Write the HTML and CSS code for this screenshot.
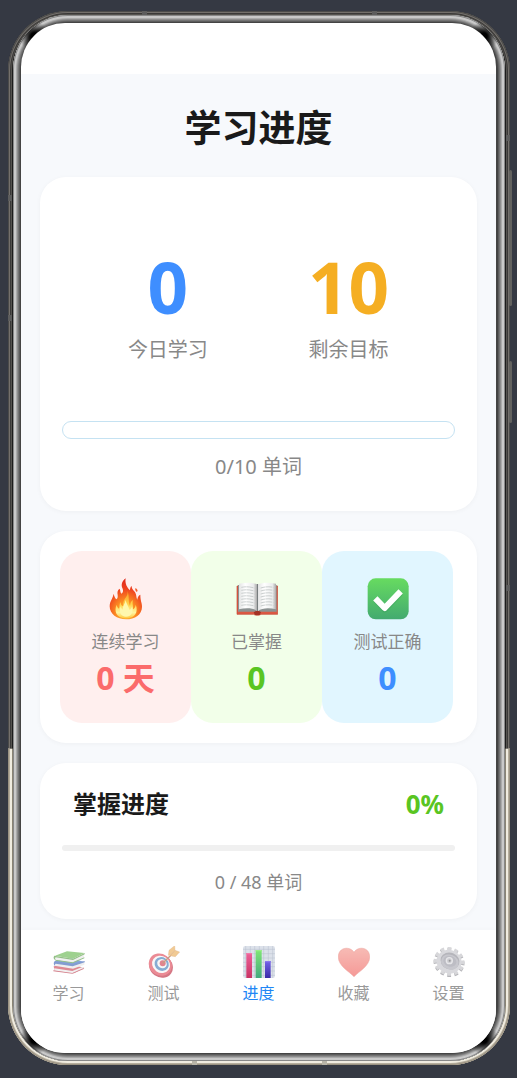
FILE: index.html
```html
<!DOCTYPE html>
<html lang="zh-CN">
<head>
<meta charset="utf-8">
<meta name="viewport" content="width=device-width, initial-scale=1">
<title>学习进度</title>
<link rel="stylesheet" href="styles.css">
</head>
<body>
<div class="phone">
  <span class="key key-volume"></span>
  <span class="key key-power"></span>
  <span class="band band-left-high"></span>
  <span class="band band-left-low"></span>
  <span class="band band-right-high"></span>
  <span class="band band-right-low"></span>
  <span class="band band-wide band-top-left"></span>
  <span class="band band-wide band-top-right"></span>
  <span class="band band-wide band-bottom-left"></span>
  <span class="band band-wide band-bottom-right"></span>
  <div class="bezel">
    <div class="corners">
      <div class="screen">
        <div class="status-bar"></div>
        <main class="content">
          <h1 class="title">学习进度</h1>

          <section class="card today">
            <div class="today-numbers">
              <div class="today-item">
                <strong class="big blue">0</strong>
                <span class="label">今日学习</span>
              </div>
              <div class="today-item">
                <strong class="big orange">10</strong>
                <span class="label">剩余目标</span>
              </div>
            </div>
            <progress class="goal-bar" value="0" max="10" aria-label="今日学习"></progress>
            <p class="label">0/10 单词</p>
          </section>

          <section class="card stats">
            <div class="stat stat-red">
              <svg class="stat-icon" viewBox="13 26 126 126" aria-hidden="true">
                <defs>
                  <radialGradient id="flame" cx=".5" cy=".85" r=".8"><stop offset="0" stop-color="#ffc43a"/><stop offset=".4" stop-color="#fb8a22"/><stop offset=".75" stop-color="#ee421f"/><stop offset="1" stop-color="#e12c1c"/></radialGradient>
                  <linearGradient id="core" x1="0" y1="0" x2="0" y2="1"><stop offset="0" stop-color="#fb9125"/><stop offset=".5" stop-color="#ffd34c"/><stop offset=".8" stop-color="#fff5a0"/><stop offset="1" stop-color="#ffc83d"/></linearGradient>
                </defs>
                <path fill="url(#flame)" d="M75 27c-11 7-15 21-9 31 3 7 0 13-4 15-3-4-3-10-5-15-6 3-8 11-6 19 1 7-1 12-4 13-5-4-5-10-9-17 1 12-11 21-11 38 0 23 22 39 49 39s48-15 48-38c0-12-5-17-5-36-6 2-8 8-9 15-4-7-2-14-6-21-4-7-11-9-11-20-4 3-5 8-5 13-8-7-16-20-13-36z"/>
                <path fill="#f2602e" d="M105 56c-3 4-1 8 3 12 4-2 4-7-3-12z"/>
                <path fill="url(#core)" d="M78 62c7 12-1 20-7 29-4 7-3 14-3 20-6-2-8-7-8-13-5 6-2 13-5 20-4-3-6-7-7-12-8 17-3 41 28 41 27 0 38-20 29-41-1 8-4 12-8 14 1-12-3-17 0-28-6 3-8 9-9 18-7-17 0-33-10-48z"/>
                <path fill="#fff7ad" d="M75 92c-2 12-9 17-9 29-3-2-5-5-6-10-6 18 1 31 16 31s24-14 18-30c-2 6-5 8-8 9-2-11-9-17-11-29z"/>
              </svg>
              <span class="stat-label">连续学习</span>
              <strong class="stat-value">0 天</strong>
            </div>
            <div class="stat stat-green">
              <svg class="stat-icon" viewBox="31 26 126 126" aria-hidden="true">
                <defs><linearGradient id="page" x1="0" x2="1"><stop offset="0" stop-color="#e3e4e4"/><stop offset=".35" stop-color="#fff"/><stop offset=".8" stop-color="#eceded"/><stop offset="1" stop-color="#aaa"/></linearGradient></defs>
                <path fill="#dd5843" stroke="#c24937" stroke-width="2" d="M34 50h122v85h-50c-4 4-18 4-22 0H34z"/>
                <path fill="#8d9292" d="M37 47h116v80H101l-6 4-6-4H37z"/>
                <path fill="url(#page)" d="M40 43c20-4 42-4 54 2v80c-11-9-33-10-54-5z"/>
                <path fill="url(#page)" d="M97 45c12-6 34-6 54-2v77c-21-5-43-4-54 5z"/>
                <path stroke="#777d7e" stroke-width="3" d="M95.500 44v84"/>
                <path fill="none" stroke="#b4b9b9" stroke-width="2" stroke-dasharray="14 1 20 2" d="M47 54q20-4 39 2M47 63q20-4 39 2M47 72q20-4 39 2M47 81q20-4 39 2M47 90q20-4 39 2M47 99q20-4 39 2M47 108q20-4 39 2M105 56q19-6 38-2M105 65q19-6 38-2M105 74q19-6 38-2M105 83q19-6 38-2M105 92q19-6 38-2M105 101q19-6 38-2M105 110q19-6 38-2"/>
                <path fill="#a33225" d="M84 129c4-5 18-5 22 0l-4 8H88z"/>
              </svg>
              <span class="stat-label">已掌握</span>
              <strong class="stat-value">0</strong>
            </div>
            <div class="stat stat-blue">
              <svg class="stat-icon" viewBox="34 26 126 126" aria-hidden="true">
                <defs><linearGradient id="check" x1="0" y1="0" x2="0" y2="1"><stop offset="0" stop-color="#67db60"/><stop offset="1" stop-color="#43aa70"/></linearGradient></defs>
                <rect x="36" y="27" width="123" height="123" rx="24" fill="url(#check)"/>
                <path fill="none" stroke="#389957" stroke-opacity=".4" stroke-width="18" stroke-linejoin="round" d="m60 91 27 29 48-49"/>
                <path fill="none" stroke="#fff" stroke-width="18" stroke-linejoin="round" d="m59 87 28 29 48-50"/>
              </svg>
              <span class="stat-label">测试正确</span>
              <strong class="stat-value">0</strong>
            </div>
          </section>

          <section class="card mastery">
            <div class="mastery-head">
              <h2 class="mastery-title">掌握进度</h2>
              <strong class="percent">0%</strong>
            </div>
            <progress class="mastery-bar" value="0" max="48" aria-label="掌握进度"></progress>
            <p class="mastery-count">0 / 48 单词</p>
          </section>
        </main>

        <nav class="tabs">
          <a class="tab" href="#learn">
            <svg class="tab-icon" viewBox="66 46 96 96" aria-hidden="true">
              <path fill="#c93b4c" d="m68 107 50-8 42 13-31 16-58-7z"/><path fill="#e9e9e9" d="m70 113 54 8 32-13v8l-32 12-54-8z"/><path fill="#ba3446" d="m67 119 57 8 34-15v3l-34 14-57-7z"/>
              <path fill="#3568c5" d="m71 91 51-8 38 11-36 12-50-8z"/><path fill="#e5e5e5" d="m75 96 51 8 34-11v9l-34 12-51-8z"/><path fill="#315cb3" d="m72 91 52 9 37-9v4l-36 12-51-8c-4 4-1 7 2 9l-4-2c-5-5-5-11 0-15z"/>
              <path fill="#5fb345" d="m72 75 36-13 52 5-34 17z"/><path fill="#e7e7e7" d="m75 79 52 6 32-14v9l-34 16-52-8z"/><path fill="#4d9538" d="m70 75 56 9 35-17v4l-35 17-52-8c-3 3-1 6 1 9l-4-2c-4-4-4-8-1-12zM73 87l52 8 35-15v3l-35 15-52-8z"/>
            </svg>
            <span>学习</span>
          </a>
          <a class="tab" href="#quiz">
            <svg class="tab-icon" viewBox="353 46 96 96" aria-hidden="true">
              <ellipse cx="392" cy="107" rx="37" ry="33" fill="#b81e34" transform="rotate(35 392 107)"/>
              <ellipse cx="390" cy="102" rx="36" ry="32" fill="#df3f50" transform="rotate(35 390 102)"/>
              <ellipse cx="392" cy="101" rx="28" ry="25" fill="#f5f5f5" transform="rotate(35 392 101)"/>
              <ellipse cx="394" cy="100" rx="22" ry="20" fill="#3676b6" transform="rotate(35 394 100)"/>
              <ellipse cx="395" cy="99" rx="15" ry="13" fill="#f1f1f1" transform="rotate(35 395 99)"/>
              <circle cx="397" cy="98" r="9" fill="#ce3446"/>
              <path stroke="#a45b32" stroke-width="4" d="m397 98 38-37"/>
              <path fill="#e9a84e" stroke="#c77e34" stroke-width="1" d="m414 74 2-15 17-14 1 13-15 15zM419 75l15-16 14 5-13 14z"/>
            </svg>
            <span>测试</span>
          </a>
          <a class="tab tab-active" href="#progress" aria-current="page">
            <svg class="tab-icon" viewBox="9 45 96 96" aria-hidden="true">
              <defs>
                <linearGradient id="pink" x1="0" y1="0" x2="0" y2="1"><stop offset="0" stop-color="#ee6299"/><stop offset="1" stop-color="#c93264"/></linearGradient>
                <linearGradient id="green" x1="0" y1="0" x2="0" y2="1"><stop offset="0" stop-color="#80e775"/><stop offset="1" stop-color="#42aa7e"/></linearGradient>
                <linearGradient id="violet" x1="0" y1="0" x2="0" y2="1"><stop offset="0" stop-color="#7562e8"/><stop offset="1" stop-color="#392ba8"/></linearGradient>
              </defs>
              <rect x="9" y="45" width="96" height="96" rx="7" fill="#dce1ea"/>
              <path fill="none" stroke="#b9c1ce" stroke-width="1.500" d="M17 45v96M31 45v96M44 45v96M58 45v96M71 45v96M85 45v96M98 45v96M9 55h96M9 68h96M9 81h96M9 94h96M9 107h96M9 120h96M9 133h96"/>
              <path fill="url(#pink)" d="M19 66h17v75H19z"/><path fill="url(#green)" d="M47 57h18v84H47z"/><path fill="url(#violet)" d="M75 90h17v51H75z"/>
              <path fill="#f27baa" d="M19 66h17v4H19z"/><path fill="#98ef87" d="M47 57h18v4H47z"/><path fill="#8a76ee" d="M75 90h17v4H75z"/>
            </svg>
            <span>进度</span>
          </a>
          <a class="tab" href="#favorites">
            <svg class="tab-icon" viewBox="293 46 96 96" aria-hidden="true">
              <defs><linearGradient id="heart" x1="0" y1="0" x2="0" y2="1"><stop offset="0" stop-color="#f28e84"/><stop offset="1" stop-color="#f05753"/></linearGradient></defs>
              <path fill="url(#heart)" stroke="#df6258" stroke-width="1.500" d="M341 65c-11-19-47-17-47 14 0 27 32 43 47 59 15-16 47-32 47-59 0-31-36-33-47-14z"/>
            </svg>
            <span>收藏</span>
          </a>
          <a class="tab" href="#settings">
            <svg class="tab-icon" viewBox="579 46 96 96" aria-hidden="true">
              <g transform="rotate(22 627 93)">
                <ellipse cx="628" cy="95" rx="41" ry="37" fill="none" stroke="#85858c" stroke-width="12" stroke-dasharray="10.500 10"/>
                <ellipse cx="627" cy="92" rx="41" ry="37" fill="none" stroke="#bebec3" stroke-width="11" stroke-dasharray="10.500 10"/>
                <ellipse cx="627" cy="93" rx="38" ry="35" fill="#c1c1c7"/>
                <ellipse cx="629" cy="90" rx="29" ry="25" fill="#85858f"/>
                <ellipse cx="630" cy="93" rx="27" ry="22" fill="#a5a5af"/>
                <ellipse cx="629" cy="91" rx="20" ry="16" fill="#92929e"/>
              </g>
              <circle cx="628" cy="90" r="11" fill="#d8d8dc"/><circle cx="628" cy="90" r="7" fill="#aaaab3"/><circle cx="629" cy="90" r="3" fill="#555"/>
            </svg>
            <span>设置</span>
          </a>
        </nav>
      </div>
    </div>
  </div>
</div>
</body>
</html>
```
FILE: styles.css
```css
* {
  box-sizing: border-box;
}

body {
  margin: 0;
  min-height: 100vh;
  padding: 11px 7px 13px 8px;
  display: flex;
  background: #353943;
  font-family: "Noto Sans", "Noto Sans CJK SC", sans-serif;
  color: #1a1a1a;
}

h1, h2, p {
  margin: 0;
}

/* Device frame */
.phone {
  position: relative;
  flex: 1;
  display: flex;
  padding: 4px 5px;
}

.phone::before,
.phone::after {
  content: "";
  position: absolute;
  inset: 0;
  border-radius: 60px;
}

.phone::before {
  background: #1c1c1c;
  box-shadow: inset 0 0 0 1px #4b4b4a, inset 0 0 0 2px #74706c, inset 0 0 0 3px #3a3938, inset 0 0 0 4px #55534f;
  clip-path: inset(0 0 30% 0);
}

.phone::after {
  background: #55514a;
  box-shadow: inset 0 0 0 1px #9b9383, inset 0 0 0 2px #b5ad9c, inset 0 0 0 4px #f0ece0, inset 0 0 0 5px #8a8474;
  clip-path: inset(70% 0 0 0);
}

.key {
  position: absolute;
  right: -2px;
  width: 3px;
  border-radius: 2px;
  background: #62625f;
}

.key-volume {
  top: 159px;
  height: 136px;
}

.key-power {
  top: 350px;
  height: 62px;
}

/* Antenna bands */
.band {
  position: absolute;
  z-index: 1;
  width: 4px;
  height: 6px;
  background: #5d5d5d;
}

.band-wide {
  width: 5px;
  height: 4px;
}

.band-left-high {
  left: 0;
  top: 184px;
}

.band-left-low {
  left: 0;
  top: 304px;
}

.band-right-high {
  right: 0;
  top: 124px;
}

.band-right-low {
  right: 0;
  top: 574px;
}

.band-top-left {
  left: 134px;
  top: 0;
}

.band-top-right {
  left: 364px;
  top: 0;
}

.band-bottom-left {
  left: 184px;
  bottom: 0;
  background: #b9b5a8;
}

.band-bottom-right {
  left: 314px;
  bottom: 0;
  background: #b9b5a8;
}

.bezel {
  position: relative;
  z-index: 1;
  flex: 1;
  display: flex;
  border-radius: 55px;
  background: #444;
  box-shadow: inset 0 0 0 1px #888, inset 0 0 0 3px #c9c9c9, inset 0 0 0 4px #aaa, inset 0 0 0 5px #8d8d8d, inset 0 0 0 6px #747474, inset 0 0 0 7px #5c5c5c;
}

.corners {
  flex: 1;
  display: flex;
  padding: 8px 9px 8px 8px;
  border-radius: 55px;
  background:
    radial-gradient(circle at 21px 21px, #000 0 3px, transparent 15px),
    radial-gradient(circle at calc(100% - 21px) 21px, #000 0 3px, transparent 15px),
    radial-gradient(circle at 21px calc(100% - 21px), #000 0 3px, transparent 15px),
    radial-gradient(circle at calc(100% - 21px) calc(100% - 21px), #000 0 3px, transparent 15px);
}

.screen {
  flex: 1;
  display: flex;
  flex-direction: column;
  overflow: hidden;
  border-radius: 44px;
  background: #fff;
}

.status-bar {
  height: 51px;
}

/* Page */
.content {
  display: flex;
  flex-direction: column;
  gap: 20px;
  padding: 30px 19px 11px;
  background: #f7f9fc;
}

.title {
  margin-bottom: 5px;
  font-size: 37px;
  line-height: 48px;
  font-weight: 700;
  text-align: center;
}

.card {
  border-radius: 26px;
  background: #fff;
  box-shadow: 0 1px 5px rgba(0, 0, 0, 0.04);
}

.label {
  font-size: 20px;
  line-height: 28px;
  color: #888;
  text-align: center;
}

.today {
  display: flex;
  flex-direction: column;
  padding: 68px 22px 30px;
}

.today-numbers {
  display: flex;
  justify-content: center;
  gap: 100px;
  margin-bottom: 57px;
}

.today-item {
  display: flex;
  flex-direction: column;
  align-items: center;
  gap: 7px;
}

.big {
  font-size: 71px;
  line-height: 84px;
}

.blue {
  color: #3e8eff;
}

.orange {
  color: #f5ae22;
}

progress {
  appearance: none;
  display: block;
  width: 100%;
  border: 0;
}

progress::-webkit-progress-bar {
  background: transparent;
}

progress::-webkit-progress-value {
  background: #3e8eff;
}

.goal-bar {
  height: 18px;
  margin-bottom: 14px;
  border: 1px solid #c5e2f2;
  border-radius: 9px;
  background: #fff;
}

.stats {
  display: grid;
  grid-template-columns: repeat(3, 1fr);
  padding: 20px 24px 20px 20px;
}

.stat {
  display: flex;
  flex-direction: column;
  align-items: center;
  padding: 27px 0 22px;
  border-radius: 22px;
}

.stat-icon {
  width: 42px;
  height: 42px;
  margin-bottom: 10px;
}

.stat-label {
  font-size: 17px;
  line-height: 24px;
  color: #888;
}

.stat-value {
  font-size: 32px;
  line-height: 47px;
}

.stat-red {
  background: #ffefee;
}

.stat-red .stat-value {
  color: #fb6b6b;
}

.stat-green {
  background: #f2ffe9;
}

.stat-green .stat-value {
  color: #59c522;
}

.stat-blue {
  background: #e1f6ff;
}

.stat-blue .stat-value {
  color: #3e8eff;
}

.mastery {
  padding: 23px 22px 24px;
}

.mastery-head {
  display: flex;
  align-items: center;
  justify-content: space-between;
  margin-bottom: 23px;
  padding: 0 11px;
}

.mastery-title {
  font-size: 24px;
  line-height: 36px;
}

.percent {
  font-size: 26px;
  line-height: 36px;
  color: #59c522;
}

.mastery-bar {
  height: 6px;
  margin-bottom: 18px;
  border-radius: 3px;
  background: #f0f0f0;
}

.mastery-count {
  font-size: 18px;
  line-height: 26px;
  color: #888;
  text-align: center;
}

/* Bottom navigation */
.tabs {
  flex: 1;
  display: grid;
  grid-template-columns: repeat(5, 1fr);
  align-items: start;
  padding-top: 16px;
  background: #fff;
  box-shadow: 0 -1px 4px rgba(0, 0, 0, 0.02);
}

.tab {
  display: flex;
  flex-direction: column;
  align-items: center;
  gap: 4px;
  font-size: 16px;
  line-height: 22px;
  color: #999;
  text-decoration: none;
}

.tab-icon {
  width: 32px;
  height: 32px;
  opacity: 0.6;
}

.tab-active {
  color: #2186f5;
}

.tab-active .tab-icon {
  opacity: 1;
}
```
